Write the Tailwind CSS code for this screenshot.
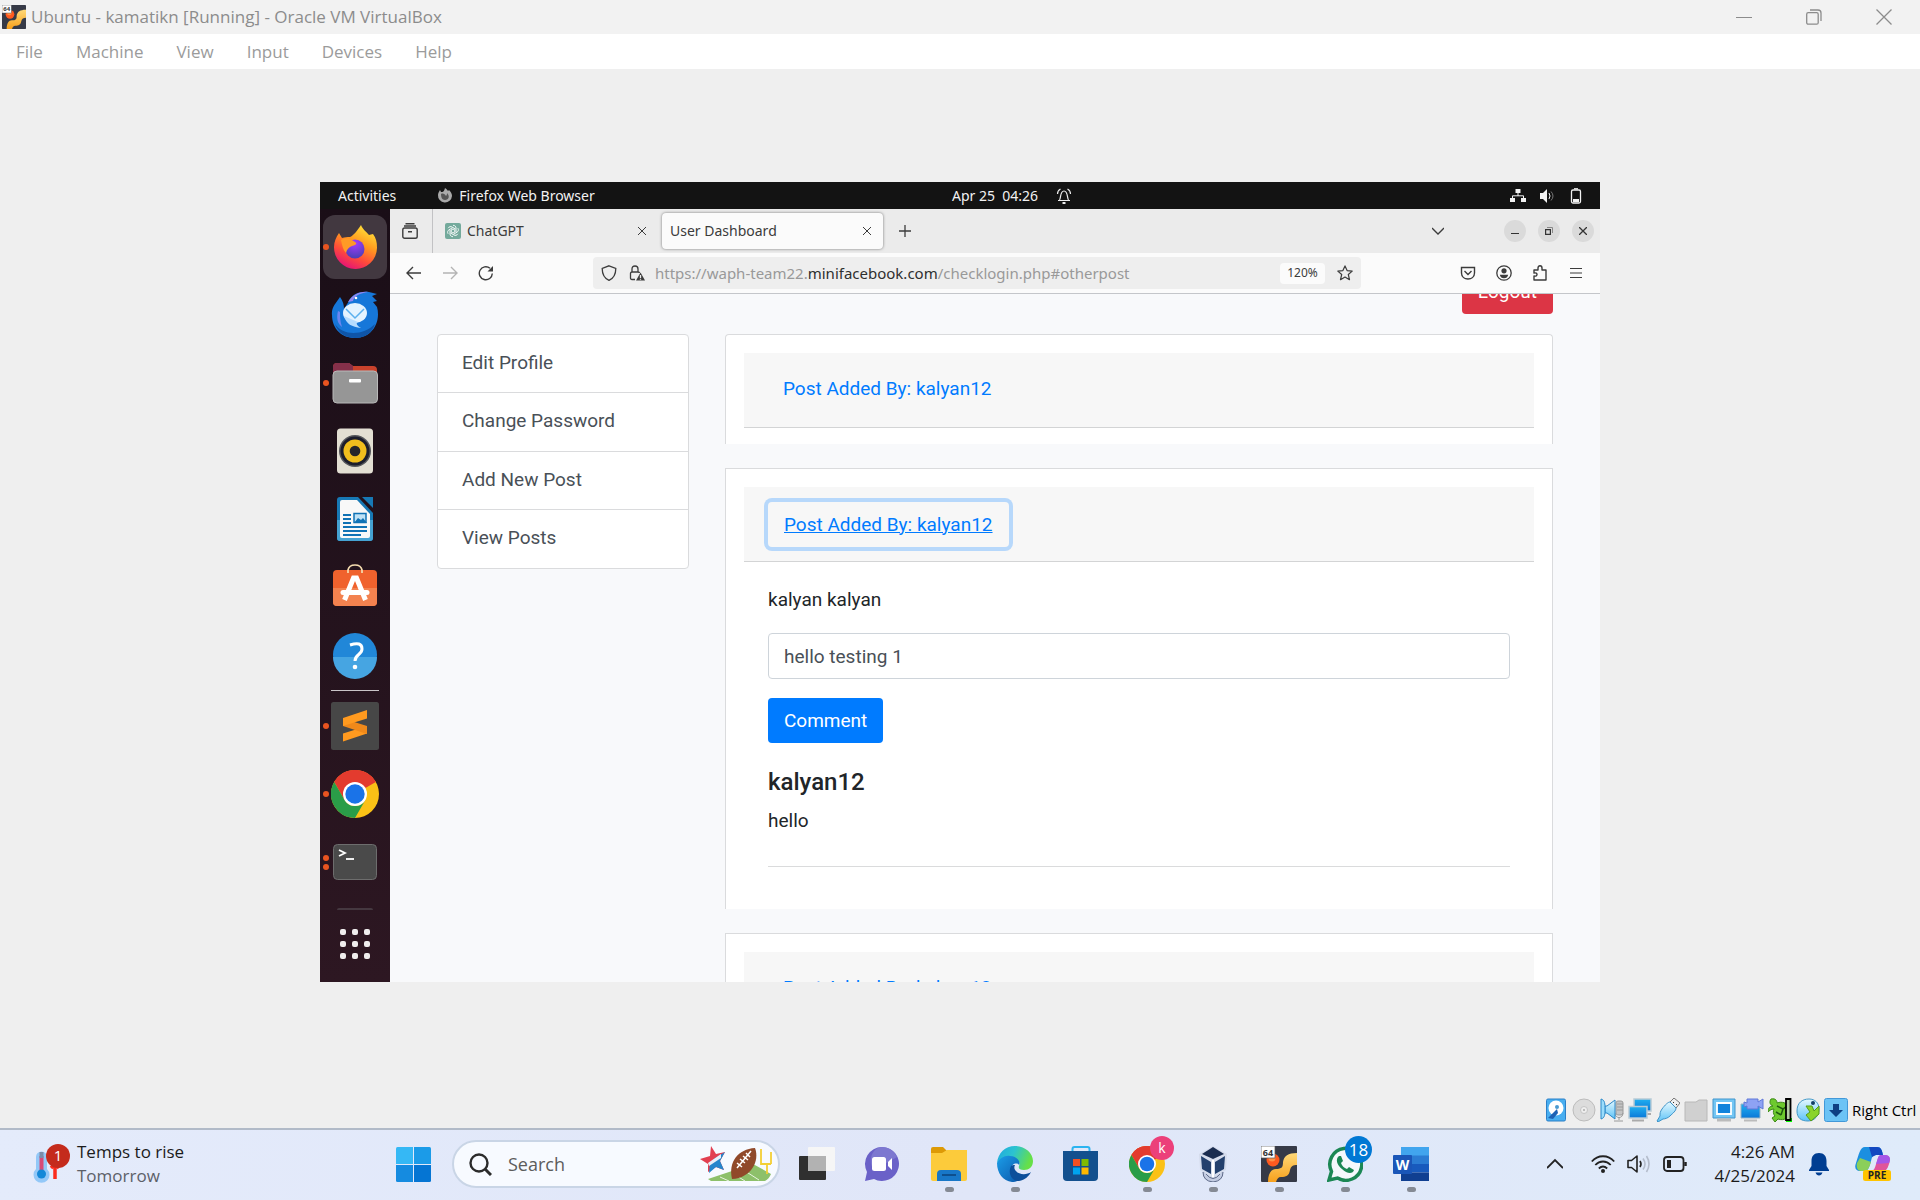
<!DOCTYPE html>
<html lang="en">
<head>
<meta charset="utf-8">
<title>Ubuntu - kamatikn [Running] - Oracle VM VirtualBox</title>
<script src="https://cdn.jsdelivr.net/npm/@tailwindcss/browser@4"></script>
</head>
<body class="flex h-screen flex-col overflow-hidden bg-[#efefef] font-['Open_Sans',sans-serif]">

<!-- Gradients and artwork shared by several icons -->
<svg class="absolute size-0" aria-hidden="true">
  <defs>
    <linearGradient id="gold" x1="0" y1="0" x2="0" y2="1"><stop offset="0" stop-color="#ffd978"/><stop offset="1" stop-color="#f7a01c"/></linearGradient>
    <linearGradient id="sky" x1="0" y1="0" x2="0" y2="1"><stop offset="0" stop-color="#e4f8ff"/><stop offset="1" stop-color="#5dc3f7"/></linearGradient>
    <linearGradient id="azure" x1="0" y1="0" x2="0" y2="1"><stop offset="0" stop-color="#22b0f0"/><stop offset="1" stop-color="#0a78d8"/></linearGradient>
    <linearGradient id="ffbody" x1=".8" y1="0" x2=".3" y2="1"><stop offset="0" stop-color="#ffe93c"/><stop offset=".4" stop-color="#ff9a1f"/><stop offset=".7" stop-color="#ff4b3a"/><stop offset="1" stop-color="#e3107a"/></linearGradient>
    <radialGradient id="ffglobe" cx=".5" cy=".2" r=".8"><stop offset="0" stop-color="#a53bff"/><stop offset="1" stop-color="#4a3fb5"/></radialGradient>
    <linearGradient id="edge1" x1="0" y1="0" x2="1" y2=".3"><stop offset="0" stop-color="#1fa8e0"/><stop offset=".5" stop-color="#2cc3d0"/><stop offset="1" stop-color="#66e048"/></linearGradient>
    <linearGradient id="edge2" x1="0" y1="0" x2="1" y2="1"><stop offset="0" stop-color="#1b9de8"/><stop offset="1" stop-color="#0b55a8"/></linearGradient>
    <symbol id="chrome" viewBox="0 0 48 48">
      <circle cx="24" cy="24" r="24" fill="#fbc116"/>
      <path d="M24 24 3.2 12A24 24 0 0 1 44.8 12Z" fill="#e33b2e"/>
      <path d="M24 12h20.8A24 24 0 0 0 3.2 12L13.6 30Z" fill="#e33b2e"/>
      <path d="M3.2 12A24 24 0 0 0 24 48L34.4 30A12 12 0 0 1 13.6 30Z" fill="#2a9d48"/>
      <circle cx="24" cy="24" r="12" fill="#fff"/><circle cx="24" cy="24" r="9.7" fill="#1a73e8"/>
    </symbol>
    <symbol id="vm64" viewBox="0 0 36 36">
      <rect width="36" height="36" rx="1" fill="#363a47"/>
      <circle cx="12" cy="14" r="6.5" fill="#ff5a1f"/><circle cx="11" cy="12" r="3.5" fill="#ff9248"/>
      <path d="M36 7v12c-4 0-6 1-7 5-1 6-4 7-9 7-3 0-4 2-5 5H7c0-8 3-13 8-13 6 0 7-2 7-7 1-6 5-9 14-9Z" fill="url(#gold)"/>
      <rect x="0" y="0" width="14" height="12" fill="#fff" stroke="#555" stroke-width=".7"/>
      <text x="7" y="9.5" text-anchor="middle" font-family="Open Sans" font-size="9" font-weight="700" fill="#333">64</text>
    </symbol>
  </defs>
</svg>

<!-- Host window title bar -->
<header class="flex h-[34px] shrink-0 items-center bg-[#f2f2f2] text-[#8c8c8c]">
  <svg class="ml-0.5 size-6" viewBox="0 0 36 36"><use href="#vm64"/></svg>
  <h1 class="ml-[5px] text-[17px]">Ubuntu - kamatikn [Running] - Oracle VM VirtualBox</h1>
  <div class="ml-auto flex items-center gap-[54px] pr-7">
    <button aria-label="Minimize"><svg class="size-4" viewBox="0 0 16 16" fill="none" stroke="currentColor"><path d="M0 8.500h16"/></svg></button>
    <button aria-label="Restore"><svg class="size-4" viewBox="0 0 16 16" fill="none" stroke="currentColor" stroke-width="1.300"><rect x=".7" y="3.700" width="11.500" height="11.500" rx="1.500"/><path d="M4 1h8q3 0 3 3v8"/></svg></button>
    <button aria-label="Close"><svg class="size-4" viewBox="0 0 16 16" fill="none" stroke="currentColor" stroke-width="1.300"><path d="m.5.5 15 15m0-15-15 15"/></svg></button>
  </div>
</header>

<nav class="flex h-[35px] shrink-0 items-center gap-[33px] bg-white px-4 text-[17px] text-[#9b9b9b]" aria-label="Machine menu">
  <button>File</button><button>Machine</button><button>View</button><button>Input</button><button>Devices</button><button>Help</button>
</nav>

<!-- Guest display -->
<main class="flex min-h-0 flex-1 items-center justify-center">
<section class="flex aspect-[8/5] w-2/3 flex-col overflow-hidden" aria-label="Guest screen">

  <div class="relative flex h-[27px] shrink-0 items-center bg-[#131313] font-['Noto_Sans',sans-serif] text-sm text-[#f2f2f2]">
    <button class="ml-[18px]">Activities</button>
    <button class="ml-[41px] flex items-center gap-1.5">
      <svg class="size-4" viewBox="0 0 16 16"><path d="M1 7C1 5 2 4 3 2l1 2c2 0 3 0 4-4 2 1 3 3 3 3l1-1c2 2 3 4 3 6a7 7 0 0 1-14-1Z" fill="#aaa"/><path d="M4 6c2-1 4 0 5 2 1-1 1-2 1-3 3 3 2 7-2 7-3 0-4-3-4-6Z" fill="#555"/></svg>
      Firefox Web Browser
    </button>
    <div class="absolute inset-x-0 flex items-center justify-center gap-[18px] pl-[104px]">
      <time class="whitespace-pre">Apr 25  04:26</time>
      <svg class="size-4" viewBox="0 0 16 16" fill="none" stroke="#eee" stroke-width="1.200"><path d="M2 12.500h12M3.500 12C5 10 4 3 8 3s3 7 4.500 9M1.500 6c0-3 1-4 3-5M14.500 6c0-3-1-4-3-5"/><path d="M6.500 15h3" stroke-width="2"/></svg>
    </div>
    <div class="ml-auto flex items-center gap-[13px] pr-4">
      <svg class="size-4" viewBox="0 0 16 16" fill="#f2f2f2"><path d="M5.500 1h5v4h-5zM0 10h5v4H0zM11 10h5v4h-5z"/><path d="M8 5v3M2.500 11V7.800h11V11" fill="none" stroke="#f2f2f2"/></svg>
      <svg class="size-4" viewBox="0 0 16 16" fill="#f2f2f2"><path d="M1 5h3l4-4v14l-4-4H1z"/><path d="M10 5q2 3 0 6" fill="none" stroke="#f2f2f2"/><path d="M12 3.500q4 4.500 0 9" fill="none" stroke="#777"/></svg>
      <svg class="size-4" viewBox="0 0 16 16" fill="none" stroke="#f2f2f2" stroke-width="1.300"><rect x="3.500" y="2" width="9" height="13" rx="1.500"/><path d="M6 .8h4"/><path d="M5 11h6v3H5z" fill="#f2f2f2" stroke="none"/></svg>
    </div>
  </div>

  <div class="flex min-h-0 flex-1">
    <!-- Dock -->
    <aside class="flex w-[70px] shrink-0 flex-col items-center bg-linear-to-b from-[#1a0e17] to-[#2d1722] pt-1" aria-label="Dock">
      <button class="relative flex h-[68px] w-full items-center justify-center" aria-label="Firefox">
        <span class="absolute left-[3px] flex size-16 rounded-xl bg-[#423840]"></span>
        <span class="absolute left-[3px] size-1.5 rounded-full bg-[#e95420]"></span>
        <svg class="relative size-11" viewBox="0 0 44 44"><path d="M1 22C1 17 3 12 6 8l3 5c3-1 5-1 8-1 3-1 7-6 11-12 2 5 5 6 8 10l4-1c3 4 4 8 4 14a21 21 0 0 1-43-1Z" fill="url(#ffbody)"/><circle cx="22" cy="24" r="9.500" fill="url(#ffglobe)"/><path d="M8 15c4-3 9-2 14 2 2 1 2 3-3 4-3 1-5 3-6 7-3-3-4-8-5-13Z" fill="#ff9a26"/></svg>
      </button>
      <button class="flex h-[68px] items-center" aria-label="Thunderbird">
        <svg class="size-12" viewBox="0 0 48 48"><path d="M1 24C0 17 5 12 9 6c3 4 4 8 4 12l5-8C21 3 29 0 38 1l8 2-5 2 5 5-4 1 4 5c4 14-4 31-22 31C11 47 1 38 1 24Z" fill="#1677d9"/><path d="M4 33c8 12 28 12 40 0-3 9-10 14-20 14C15 47 7 42 4 33Z" fill="#0f55a8"/><path d="M17 11C21 4 29 0 37 1c-8 1-14 4-15 9Z" fill="#9287f0"/><circle cx="25" cy="7" r="1.300" fill="#fff"/><ellipse cx="24" cy="22" rx="12" ry="10" fill="#e4f3ff"/><path d="M13 25c2 8 8 11 17 12-5-3-5-5-3-6Z" fill="#b5dcff"/><path d="m15 18 9 9 9-9" fill="none" stroke="#5bb0ee" stroke-width="1.500"/><path d="M7 20c-2 8 0 13 4 16-2-6-2-11-2-15Z" fill="#6a86f0"/></svg>
      </button>
      <button class="relative flex h-[68px] w-full items-center justify-center" aria-label="Files">
        <span class="absolute left-[3px] size-1.5 rounded-full bg-[#e95420]"></span>
        <svg class="size-12" viewBox="0 0 48 48"><path d="M2 8q0-4 4-4h12l4 3h20q4 0 4 4v12H2Z" fill="#c9422c"/><path d="M2 8q0-4 4-4h12l4 3v12H2Z" fill="#85304a"/><rect x="2" y="12" width="44.500" height="32" rx="4" fill="#969696" stroke="#b9b9b9"/><rect x="18" y="20" width="12" height="3.500" rx="1" fill="#fff"/></svg>
      </button>
      <button class="flex h-[68px] items-center" aria-label="Rhythmbox">
        <svg class="size-12" viewBox="0 0 48 48"><rect x="6" y="1.500" width="36" height="45" rx="3.500" fill="#e3dfd3"/><circle cx="24" cy="24" r="16" fill="#55565a"/><circle cx="24" cy="24" r="14.500" fill="#1c1d2c"/><circle cx="24" cy="24" r="11.500" fill="#f0bd1d"/><circle cx="24" cy="24" r="5.300" fill="#26252a"/></svg>
      </button>
      <button class="flex h-[68px] items-center" aria-label="LibreOffice Writer">
        <svg class="size-12" viewBox="0 0 48 48"><path d="M9 2h18l15 16v25q0 3-3 3H9q-3 0-3-3V5q0-3 3-3Z" fill="#1779b5"/><path d="M6 25h36v18q0 3-3 3H9q-3 0-3-3Z" fill="#45a2d2"/><path d="M11 5h15l13 14v22q0 2-2 2H11q-2 0-2-2V7q0-2 2-2Z" fill="#f8f8f8"/><path d="M31 2h11v11Z" fill="#1779b5"/><path d="M12 20h8M12 24h8M12 28h8M12 32h24M12 36h24M12 40h18" stroke="#0f72b5" stroke-width="2"/><path d="M23 18.500h12v9H23z" fill="#bfe2f6" stroke="#0f72b5" stroke-width="1.500"/><path d="m23 28 4-5 3 2 2-2 4 5Z" fill="#0f72b5"/></svg>
      </button>
      <button class="flex h-[68px] items-center" aria-label="Ubuntu Software">
        <svg class="size-12" viewBox="0 0 48 48"><rect x="2" y="7" width="44" height="36" rx="4" fill="#f0622d"/><path d="M2 25h44v14q0 4-4 4H6q-4 0-4-4Z" fill="#f3824f"/><path d="M17 10V7q1-5 7-5t7 5v3" fill="none" stroke="#f5ddb0" stroke-width="1.700"/><path d="m13.500 37 9-22h3l9 22" fill="none" stroke="#fff" stroke-width="5"/><path d="M12 29.500h24" stroke="#fff" stroke-width="5" stroke-linecap="round"/></svg>
      </button>
      <button class="flex h-[68px] items-center" aria-label="Help">
        <svg class="size-12" viewBox="0 0 48 48"><circle cx="24" cy="24" r="22" fill="#2187d8"/><path d="M2 26h44a22 22 0 0 1-44 0Z" fill="#46a5e2"/><path d="M19 14q12-4 12 4c0 6-7 5-7 12" fill="none" stroke="#fff" stroke-width="3"/><circle cx="24" cy="36" r="2.300" fill="#fff"/></svg>
      </button>
      <div class="my-px h-px w-12 bg-[#c9c4c7]"></div>
      <button class="relative flex h-[68px] w-full items-center justify-center" aria-label="Sublime Text">
        <span class="absolute left-[3px] size-1.5 rounded-full bg-[#e95420]"></span>
        <svg class="size-12" viewBox="0 0 48 48"><rect width="48" height="48" rx="2.500" fill="#474747"/><path d="M12 31.500 36 24v7.500L12 39.500Z" fill="#ff9a1f"/><path d="M12 16.500 36 24v8l-24-8Z" fill="#f0891a"/><path d="M12 16 36 8v8.500L12 24Z" fill="#ff9a1f"/></svg>
      </button>
      <button class="relative flex h-[68px] w-full items-center justify-center" aria-label="Google Chrome">
        <span class="absolute left-[3px] size-1.5 rounded-full bg-[#e95420]"></span>
        <svg class="size-12"><use href="#chrome"/></svg>
      </button>
      <button class="relative flex h-[68px] w-full items-center justify-center" aria-label="Terminal">
        <span class="absolute left-[3px] flex flex-col gap-[3px]"><i class="size-1.5 rounded-full bg-[#e95420]"></i><i class="size-1.5 rounded-full bg-[#e95420]"></i></span>
        <svg class="size-12" viewBox="0 0 48 48"><rect x="2.500" y="6.500" width="43" height="35" rx="4" fill="#4a4a4a" stroke="#6d6d6d"/><path d="m8 12 6 3-6 3" fill="none" stroke="#fff" stroke-width="1.800"/><path d="M15 21h8" stroke="#fff" stroke-width="1.800"/></svg>
      </button>
      <div class="mt-3 h-0.5 w-9 rounded-t-full bg-[#453840]"></div>
      <button class="mt-[19px] grid grid-cols-3 gap-1.5" aria-label="Show Applications">
        <i class="size-1.5 rounded-xs bg-[#f0eeee]"></i><i class="size-1.5 rounded-xs bg-[#f0eeee]"></i><i class="size-1.5 rounded-xs bg-[#f0eeee]"></i>
        <i class="size-1.5 rounded-xs bg-[#f0eeee]"></i><i class="size-1.5 rounded-xs bg-[#f0eeee]"></i><i class="size-1.5 rounded-xs bg-[#f0eeee]"></i>
        <i class="size-1.5 rounded-xs bg-[#f0eeee]"></i><i class="size-1.5 rounded-xs bg-[#f0eeee]"></i><i class="size-1.5 rounded-xs bg-[#f0eeee]"></i>
      </button>
    </aside>

    <!-- Firefox window -->
    <div class="flex min-w-0 flex-1 flex-col">
      <div class="flex h-11 shrink-0 items-center bg-[#ebebeb] font-['Noto_Sans',sans-serif] text-sm text-[#3c3c3c]">
        <button class="flex h-full w-[43px] items-center border-r border-[#c2c2c4] pl-3" aria-label="Recent browsing">
          <svg class="size-4" viewBox="0 0 16 16" fill="none" stroke="currentColor" stroke-width="1.400"><rect x=".8" y="5" width="14.400" height="10.200" rx="1.800"/><path d="M2 3h12M3.500.7h9M6 8.700h4"/></svg>
        </button>
        <div class="flex w-[229px] items-center pr-4 pl-3">
          <svg class="size-4" viewBox="0 0 16 16"><rect width="16" height="16" rx="2" fill="#74aa9c"/><g fill="none" stroke="#fff" stroke-width=".9"><circle cx="8" cy="8" r="1.900"/><path d="M8 2.300c2 0 3 1.400 3 2.700v4M12.900 5.200c1 1.700.3 3.300-.9 4l-3.400 2M12.900 10.800c-1 1.700-2.700 1.900-3.900 1.200L5.500 10M8 13.700c-2 0-3-1.400-3-2.700V7M3.100 10.800c-1-1.700-.3-3.300.9-4l3.400-2M3.100 5.200c1-1.700 2.700-1.900 3.900-1.200l3.500 2"/></g></svg>
          <span class="ml-1.5">ChatGPT</span>
          <button class="ml-auto" aria-label="Close tab"><svg class="size-2" viewBox="0 0 8 8" fill="none" stroke="currentColor"><path d="m0 0 8 8m0-8-8 8"/></svg></button>
        </div>
        <div class="flex h-9 w-[221px] items-center rounded bg-[#fbfbfb] pr-3 pl-2 shadow-[0_0_3px_rgba(0,0,0,0.5)]">
          <span>User Dashboard</span>
          <button class="ml-auto" aria-label="Close tab"><svg class="size-2" viewBox="0 0 8 8" fill="none" stroke="currentColor"><path d="m0 0 8 8m0-8-8 8"/></svg></button>
        </div>
        <button class="ml-4" aria-label="New tab"><svg class="size-3" viewBox="0 0 12 12" fill="none" stroke="currentColor" stroke-width="1.300"><path d="M6 0v12M0 6h12"/></svg></button>
        <button class="ml-auto" aria-label="List all tabs"><svg class="size-3" viewBox="0 0 12 12" fill="none" stroke="currentColor" stroke-width="1.300"><path d="m0 3 6 6 6-6"/></svg></button>
        <div class="ml-[60px] flex gap-3 pr-1.5">
          <button class="flex size-[22px] items-center justify-center rounded-full bg-[#dadada]" aria-label="Minimize"><svg class="size-2" viewBox="0 0 8 8"><path d="M0 6h8v1H0z" fill="#333"/></svg></button>
          <button class="flex size-[22px] items-center justify-center rounded-full bg-[#dadada]" aria-label="Restore"><svg class="size-2" viewBox="0 0 8 8" fill="none"><path d="M2 .5h5.500V6" stroke="#888"/><path d="M.6 2.600h4.800v4.800H.6z" stroke="#333" stroke-width="1.200"/></svg></button>
          <button class="flex size-[22px] items-center justify-center rounded-full bg-[#dadada]" aria-label="Close"><svg class="size-2" viewBox="0 0 8 8" fill="none" stroke="#333" stroke-width="1.300"><path d="m0 0 8 8m0-8-8 8"/></svg></button>
        </div>
      </div>

      <div class="flex h-[41px] shrink-0 items-center border-b border-[#c4c6ca] bg-[#fbfbfb] font-['Noto_Sans',sans-serif] text-[#3c3c3c]">
        <div class="flex items-center gap-5 pl-4">
          <button aria-label="Back"><svg class="size-4" viewBox="0 0 16 16" fill="none" stroke="currentColor" stroke-width="1.400"><path d="M15 8H1m6-6L1 8l6 6"/></svg></button>
          <button aria-label="Forward"><svg class="size-4" viewBox="0 0 16 16" fill="none" stroke="#b4b4b4" stroke-width="1.400"><path d="M1 8h14M9 2l6 6-6 6"/></svg></button>
          <button aria-label="Reload"><svg class="size-4" viewBox="0 0 16 16" fill="none" stroke="currentColor" stroke-width="1.400"><path d="M14.300 8.500A6.500 6.500 0 1 1 12 3.300"/><path d="M15 1v5.500H9.500Z" fill="currentColor" stroke="none"/></svg></button>
        </div>
        <div class="ml-[99px] flex h-8 w-[768px] items-center rounded bg-[#eeeeee] pl-2">
          <svg class="size-4" viewBox="0 0 16 16" fill="none" stroke="currentColor" stroke-width="1.300"><path d="m8 .8 6.800 2.600C14.800 9 13 13 8 15.300 3 13 1.200 9 1.200 3.400Z"/></svg>
          <svg class="ml-3 size-4" viewBox="0 0 16 16" fill="none" stroke="currentColor" stroke-width="1.300"><path d="M6 14.500H3q-1.500 0-1.500-1.500V8.500Q1.500 7 3 7h6q1.500 0 1.500 1M3 7V4q0-3 3-3t3 3v3"/><path d="m11.500 7.500 4.500 8H7Z" fill="currentColor" stroke="none"/><path d="M11.500 10v3m0 .8v1" stroke="#eee"/></svg>
          <div role="textbox" aria-label="Address" class="ml-2.5 text-[15px] whitespace-nowrap text-[#999999]">https://waph-team22.<span class="text-[#2f2f2f]">minifacebook.com</span>/checklogin.php#otherpost</div>
          <button class="ml-auto flex h-[21px] w-[45px] items-center justify-center rounded bg-[#fbfbfb] text-xs">120%</button>
          <button class="mr-2 ml-3" aria-label="Bookmark this page"><svg class="size-4" viewBox="0 0 16 16" fill="none" stroke="currentColor" stroke-width="1.200" stroke-linejoin="round"><path d="m8 .9 2.100 4.700 5.100.5-3.900 3.400 1.200 5.200L8 12l-4.500 2.700 1.200-5.200L.8 6.100l5.100-.5Z"/></svg></button>
        </div>
        <div class="ml-auto flex items-center gap-5 pr-4">
          <button aria-label="Save to Pocket"><svg class="size-4" viewBox="0 0 16 16" fill="none" stroke="currentColor" stroke-width="1.400"><path d="M1.500 2.500h13V8c0 8-13 8-13 0Z"/><path d="m4.500 6 3.500 3.500L11.500 6"/></svg></button>
          <button aria-label="Account"><svg class="size-4" viewBox="0 0 16 16" fill="none" stroke="currentColor" stroke-width="1.300"><circle cx="8" cy="8" r="7.200"/><circle cx="8" cy="5.800" r="2.600" fill="currentColor" stroke="none"/><path d="M3.800 9.800h8.400c-.5 2.500-2 3.500-4.200 3.500s-3.700-1-4.200-3.500Z" fill="currentColor" stroke="none"/></svg></button>
          <button aria-label="Extensions"><svg class="size-4" viewBox="0 0 16 16" fill="none" stroke="currentColor" stroke-width="1.400"><path d="M2 15V11c4 1 4-4 0-3V5h4V3c0-3 4-3 4 0v2h4v10Z" stroke-linejoin="round"/></svg></button>
          <button aria-label="Menu"><svg class="size-4" viewBox="0 0 16 16" fill="none" stroke="currentColor" stroke-width="1.200"><path d="M2 3.500h12M2 8h12M2 12.500h12"/></svg></button>
        </div>
      </div>

      <!-- User dashboard page, scrolled so the logout button is cut by the toolbar -->
      <div class="min-h-0 flex-1 overflow-hidden bg-[#f8f9fb] px-[47px] font-[Roboto,sans-serif] text-[19px] leading-[29px] text-[#212529]">
        <div class="-mt-[25px] flex justify-end">
          <button class="h-[45px] rounded bg-[#dc3545] px-4 text-white">Logout</button>
        </div>
        <div class="mt-5 flex items-start gap-9">
          <ul class="grid h-[235px] w-[252px] shrink-0 grid-rows-4 divide-y divide-[#dadbdd] rounded border border-[#dadbdd] bg-white text-[#495057]">
            <li><a href="#profile" class="flex h-full items-center px-6 pb-0.5">Edit Profile</a></li>
            <li><a href="#password" class="flex h-full items-center px-6 pb-0.5">Change Password</a></li>
            <li><a href="#newpost" class="flex h-full items-center px-6 pb-0.5">Add New Post</a></li>
            <li><a href="#posts" class="flex h-full items-center px-6 pb-0.5">View Posts</a></li>
          </ul>
          <div class="flex min-w-0 flex-1 flex-col gap-6">
            <article class="rounded-t border border-b-0 border-[#dadbdd] bg-white p-[18px] pb-4">
              <div class="flex h-[75px] items-center border-b border-[#d3d4d5] bg-[#f7f7f7] px-6 pb-1">
                <button class="h-[45px] px-[15px] text-[#007bff]">Post Added By: kalyan12</button>
              </div>
            </article>
            <article class="border border-b-0 border-[#dadbdd] bg-white p-[18px]">
              <div class="flex h-[75px] items-center border-b border-[#d3d4d5] bg-[#f7f7f7] px-6">
                <button class="h-[45px] rounded px-4 text-[#007bff] underline ring-4 ring-[#b7d8fb]">Post Added By: kalyan12</button>
              </div>
              <div class="px-6 pt-[23px] pb-6">
                <p>kalyan kalyan</p>
                <form class="mt-[19px]">
                  <input type="text" aria-label="Comment text" value="hello testing 1" class="block h-[46px] w-full rounded border border-[#ced4da] px-[15px] text-[#495057]">
                  <button type="button" class="mt-[19px] block h-[45px] rounded bg-[#007bff] px-4 text-white">Comment</button>
                </form>
                <h5 class="mt-[25px] text-2xl leading-[29px] font-medium">kalyan12</h5>
                <p class="mt-[9px]">hello</p>
                <hr class="mt-[31px] border-[#dadbdc]">
              </div>
            </article>
            <article class="border border-b-0 border-[#dadbdd] bg-white p-[18px]">
              <div class="flex h-[75px] items-center border-b border-[#d3d4d5] bg-[#f7f7f7] px-6 pb-1">
                <button class="h-[45px] px-[15px] text-[#007bff]">Post Added By: kalyan12</button>
              </div>
            </article>
          </div>
        </div>
      </div>
    </div>
  </div>
</section>
</main>

<!-- VirtualBox status bar -->
<div class="flex h-[33px] shrink-0 items-start justify-end gap-1 pt-[3px] pr-0.5 text-black">
  <svg class="size-6" viewBox="0 0 24 24"><rect x="2.500" y="1" width="19" height="22" rx="1.500" fill="#48aef0" stroke="#2b80c8"/><circle cx="12" cy="10" r="7.500" fill="#fff"/><circle cx="13" cy="9" r="2" fill="#4a9ad0"/><path d="m4 20 9-9 1 4-5 6Z" fill="#1d62b5"/></svg>
  <svg class="size-6" viewBox="0 0 24 24"><circle cx="12" cy="12" r="11" fill="#dcdcdc" stroke="#bcbcbc"/><circle cx="12" cy="12" r="3.500" fill="#eee" stroke="#c4c4c4"/><circle cx="12" cy="12" r="1" fill="#aaa"/></svg>
  <svg class="size-6" viewBox="0 0 24 24"><rect x="16" y="3" width="7" height="14" rx="2" fill="#c4c4c4" stroke="#9a9a9a"/><path d="M15 15c0 6 8 6 8 0M19 19v3m-5 1h9M17 6h6m-6 3h6m-6 3h6" fill="none" stroke="#9a9a9a"/><path d="M5 8h2l8-6v19l-8-6H5Z" fill="url(#sky)" stroke="#2b88c8"/><path d="M1 1c4 1 4 5 4 10s0 9-4 10Z" fill="#9bdcfb" stroke="#2b88c8"/></svg>
  <svg class="size-6" viewBox="0 0 24 24"><path d="M6 1h17v12H6z" fill="url(#azure)" stroke="#b9ccd6" stroke-width="1.500"/><path d="M18 16h5" stroke="#aaa" stroke-width="2"/><path d="M1 8.500h18V20H1z" fill="url(#azure)" stroke="#b9ccd6" stroke-width="1.500"/><path d="M4 22.500h12" stroke="#aaa" stroke-width="2"/></svg>
  <svg class="size-6" viewBox="0 0 24 24"><path d="m14 4 4-4 6 5-4 5Z" fill="#eee" stroke="#777"/><path d="m17 4 1 1m2 1 1 1" stroke="#333"/><path d="M6 11c3-4 6-7 8-7l6 6c0 3-3 5-6 8-2 2-5 3-7 3l-5 3-1-1 3-5c0-3 0-4 2-7Z" fill="url(#sky)" stroke="#3f93c8"/></svg>
  <svg class="size-6" viewBox="0 0 24 24"><path d="M1 4h11l3-2h8v21H1Z" fill="#d0d0d0" stroke="#b8b8b8"/></svg>
  <svg class="size-6" viewBox="0 0 24 24"><path d="M1 1h22v19H1z" fill="#73c6f4" stroke="#4195cc"/><path d="M5 5h14v11H5z" fill="#1183dc" stroke="#fff" stroke-width="1.800"/><path d="M5 22h14" stroke="#bbb" stroke-width="3"/></svg>
  <svg class="size-6" viewBox="0 0 24 24"><path d="M1 6h19v14H1z" fill="url(#azure)" stroke="#9ab4c4"/><path d="M4 22.500h13" stroke="#bbb" stroke-width="2"/><path d="M7 1h11v3l5-3v10l-5-3v3H7V8L4 9V4l3 1Z" fill="#8ea2f4" stroke="#6078d8"/></svg>
  <svg class="size-6" viewBox="0 0 24 24"><path d="M3 1c5-1 6 2 6 4 5-2 10 0 12 4l-2 11c-3 2-6 2-9 1l-3 3-3-4 3-2c-2-2-2-5-1-7-3 0-5 2-6 3 0-4 2-6 5-6C2 7 1 4 3 1Z" fill="#6dc92e" stroke="#3b8a15"/><path d="m9 8 6 3 4-3m-4 3-2 6m-5-3 5 3" fill="none" stroke="#1f5a10" stroke-width="1.500"/><path d="M18 20h6v4h-6z" fill="#0f0"/><path d="M18 1h4.500v21H18z" fill="#b5cda7" stroke="#000" stroke-width="1.800"/></svg>
  <svg class="size-6" viewBox="0 0 24 24"><path d="M1 13C1 5 6 1 13 1c6 0 10 4 10 10s-4 12-11 12S1 20 1 13Z" fill="url(#sky)" stroke="#4298c8"/><circle cx="17" cy="5" r="2" fill="#113f66"/><path d="M10 8h6l2 5 5-5v8l-8 7-5-6 4-3Z" fill="#8ad42c" stroke="#559b18"/></svg>
  <svg class="size-6" viewBox="0 0 24 24"><rect x=".5" y=".5" width="23" height="23" rx="2" fill="#6cc3f5" stroke="#4298d8"/><path d="M9 6h6v6h4l-7 7-7-7h4Z" fill="#0e3f83"/></svg>
  <span class="w-[66px] text-[15px] leading-6 whitespace-nowrap">Right Ctrl</span>
</div>

<!-- Windows taskbar -->
<footer class="relative flex h-[72px] shrink-0 items-center border-t-2 border-[#b1bac8] bg-linear-to-r from-[#e4ebfb] via-[#e0e6f8] to-[#dfebfa] pb-0.5 text-[17px] leading-6 text-[#1b1b1b]">
  <button class="flex items-center gap-1.5 pl-[31px] text-left">
    <svg class="size-10 shrink-0" viewBox="0 0 40 40"><path d="M5 13a5.500 5.500 0 0 1 11 0v12a8 8 0 1 1-11 0Z" fill="#93c8f8"/><path d="M10.500 12v16" stroke="#d84a78" stroke-width="4"/><path d="M8.500 8h4v6h-4z" fill="#7b8ca8"/><circle cx="10.500" cy="30" r="4.500" fill="#1488d8"/><path d="M24 35V21m-4 3 4-4 4 4" fill="none" stroke="#fb2b1c" stroke-width="3.500"/><circle cx="27" cy="12" r="12" fill="#c42b1c"/><text x="27" y="17" text-anchor="middle" font-family="Open Sans" font-size="15" fill="#fff">1</text></svg>
    <span>Temps to rise<br><span class="text-[#5c6068]">Tomorrow</span></span>
  </button>

  <div class="absolute left-[396px] flex items-center">
    <button aria-label="Start"><svg class="size-[35px]" viewBox="0 0 35 35"><path d="M0 1.500Q0 0 1.500 0H17v17H0Z" fill="#35b8f5"/><path d="M18 0h15.500Q35 0 35 1.500V17H18Z" fill="#1b9be8"/><path d="M0 18h17v17H1.500Q0 35 0 33.500Z" fill="#158be0"/><path d="M18 18h17v15.500q0 1.500-1.500 1.500H18Z" fill="#0575d3"/></svg></button>
    <label class="ml-[21px] flex h-12 w-[328px] items-center rounded-full border-2 border-[#c9d5e6] bg-[#f7faff] pr-1 pl-[15px]">
      <svg class="size-[23px] shrink-0" viewBox="0 0 23 23" fill="none" stroke="#2b2b2b" stroke-width="2.400"><circle cx="10" cy="10" r="8.500"/><path d="m16 16 6 6" stroke-width="3"/></svg>
      <input type="search" placeholder="Search" aria-label="Search" class="ml-4 w-0 flex-1 bg-transparent text-lg placeholder:text-[#5c5c5c]">
      <svg class="h-9 w-[74px] shrink-0" viewBox="0 0 74 36"><path d="m8 33 45-15 18 10q-2 5-6 7H11Z" fill="#8dc06a"/><path d="m20 31 9 4m3-8 13 8M45 25l14 9" stroke="#e8f4e0" fill="none"/><path d="m11 0 5 8 9-2-5 9 4 9-8-3-8 5v-8l-8-5 10-3Z" fill="#e23f50"/><path d="m15 12 10-6-5 9 4 9-8-3-7 6 1-10Z" fill="#2586cc"/><path d="m8 17 13-9v4l-12 8Z" fill="#eaf0f8"/><path d="M32 33C28 16 38 3 55 2c5 13-4 30-23 31Z" fill="#90492a"/><path d="m37 22 14-17M37 17l5 4m-2-8 5 4m-2-7 5 4m-2-7 4 4" stroke="#fff" stroke-width="1.500"/><path d="M61 3v15h10M71 6v12m-4 0v10" fill="none" stroke="#f3cf35" stroke-width="1.800"/></svg>
    </label>
    <div class="ml-4 flex">
      <button class="flex h-12 w-[66px] items-center justify-start pl-[3px]" aria-label="Task view"><svg class="size-9" viewBox="0 0 36 36"><rect x="0" y="10" width="27" height="24" rx="1" fill="#2f2f2f"/><rect x="9" y="1" width="27" height="24" rx="1" fill="#f6f6f6"/><path d="M9 10h18v15H9z" fill="#b2b2b2"/></svg></button>
      <button class="flex h-12 w-[66px] items-center justify-start pl-0.5" aria-label="Chat"><svg class="size-9" viewBox="0 0 36 36"><path d="M18 1a17 17 0 1 1-8 32l-9 2 2-9A17 17 0 0 1 18 1Z" fill="#6a61c8"/><path d="M18 1a17 17 0 0 1 15 10L10 24C3 16 8 1 18 1Z" fill="#7d78d0"/><rect x="8" y="11" width="14" height="14" rx="2.500" fill="#fff"/><path d="m24 16 4-4v12l-4-4Z" fill="#fff"/></svg></button>
      <button class="relative flex h-12 w-[66px] items-center pl-[3px]" aria-label="File Explorer"><svg class="size-9" viewBox="0 0 36 36"><path d="M0 3q0-2 2-2h10l4 4-4 3H0Z" fill="#dd9a06"/><path d="M0 7h11l5-3h20v29q0 2-2 2H2q-2 0-2-2Z" fill="#fccb3b"/><path d="M6 35v-7q0-4 4-4h16q4 0 4 4v7Z" fill="#1877c8"/><path d="M11 29h14" stroke="#0e4f8e" stroke-width="2"/></svg><i class="absolute -bottom-1 left-[17px] h-[5px] w-[9px] rounded-full bg-[#858a94]"></i></button>
      <button class="relative flex h-12 w-[66px] items-center pl-[3px]" aria-label="Microsoft Edge"><svg class="size-9" viewBox="0 0 36 36"><path d="M0 17C1 7 8 0 18 0s18 7 18 15c0 6-4 9-9 9-4 0-6-1-5-4 2-4-2-8-7-8C7 12 2 15 0 17Z" fill="url(#edge1)"/><path d="M0 17c3-5 8-8 13-7 7 0 11 6 9 9-2-3-8-1-8 4 0 6 6 9 12 7-3 5-7 6-11 6C6 35 0 27 0 17Z" fill="url(#edge2)"/><path d="M14 20c-4 8 2 16 8 15 6-1 10-5 12-9-4 3-12 3-15-1-2-2-2-4-1-6-2 0-3 0-4 1Z" fill="#0d4f9a"/></svg><i class="absolute -bottom-1 left-[17px] h-[5px] w-[9px] rounded-full bg-[#858a94]"></i></button>
      <button class="flex h-12 w-[66px] items-center pl-[3px]" aria-label="Microsoft Store"><svg class="size-9" viewBox="0 0 36 36"><path d="M9.500 7V3q0-2 2-2h13q2 0 2 2v4" fill="none" stroke="#2bb4f0" stroke-width="2"/><path d="M0 5h35v26q0 4-4 4H4q-4 0-4-4Z" fill="#13508e"/><path d="M10 13h7v7h-7z" fill="#f25022"/><path d="M18.500 13h7v7h-7z" fill="#7fba00"/><path d="M10 21.500h7v7h-7z" fill="#00a4ef"/><path d="M18.500 21.500h7v7h-7z" fill="#ffb900"/></svg></button>
      <button class="relative flex h-12 w-[66px] items-center pl-[3px]" aria-label="Google Chrome"><svg class="size-9"><use href="#chrome"/></svg><span class="absolute -top-1 left-6 flex size-6 items-center justify-center rounded-full bg-[#ec407a] text-sm text-white">k</span><i class="absolute -bottom-1 left-[17px] h-[5px] w-[9px] rounded-full bg-[#858a94]"></i></button>
      <button class="relative flex h-12 w-[66px] items-center pl-[3px]" aria-label="VirtualBox"><svg class="size-9" viewBox="0 0 36 36"><path d="M8 26q0 9 10 10 10-1 10-10Z" fill="#c3cce2" stroke="#5d6987"/><path d="M11 28q7 9 14 0" fill="none" stroke="#5d6987"/><path d="m18 0 14 8-1 16-13 8L5 24 4 8Z" fill="#d5dcec"/><path d="m18 1 11 7-11 5L7 8Z" fill="#1a2c4f"/><path d="m6 10 10 6v12l-9-5ZM30 10l-10 6v12l9-5Z" fill="#23406d"/><path d="M18 14v17" stroke="#fff" stroke-width="2"/></svg><i class="absolute -bottom-1 left-[17px] h-[5px] w-[9px] rounded-full bg-[#858a94]"></i></button>
      <button class="relative flex h-12 w-[66px] items-center pl-[3px]" aria-label="Ubuntu virtual machine"><svg class="size-9"><use href="#vm64"/></svg><i class="absolute -bottom-1 left-[17px] h-[5px] w-[9px] rounded-full bg-[#858a94]"></i></button>
      <button class="relative flex h-12 w-[66px] items-center pl-[3px]" aria-label="WhatsApp"><svg class="size-9" viewBox="0 0 36 36"><path d="M2 34 4.500 25.500A16 16 0 1 1 10.500 32Z" fill="#f4f8fc" stroke="#1b8754" stroke-width="3.500"/><path d="M12 10c-4 3-2 9 3 13 5 5 11 5 12 1l-5-3-2 2c-3-1-5-3-6-6l2-2-2-5Z" fill="#1b8754"/></svg><span class="absolute -top-1 left-[21px] flex size-[27px] items-center justify-center rounded-full bg-[#0078d4] text-[17px] text-white">18</span><i class="absolute -bottom-1 left-[17px] h-[5px] w-[9px] rounded-full bg-[#858a94]"></i></button>
      <button class="relative flex h-12 w-[66px] items-center pl-[3px]" aria-label="Word"><svg class="size-9" viewBox="0 0 36 36"><path d="M8 1h28v9H8z" fill="#41a5ee"/><path d="M8 9.500h28V18H8z" fill="#2b7cd3"/><path d="M8 18h28v8.500H8z" fill="#185abd"/><path d="M8 26.500h28V35H8z" fill="#103f91"/><rect y="9" width="19" height="19" rx="1" fill="#1a56b8"/><text x="9.500" y="23.500" text-anchor="middle" font-family="Open Sans" font-size="14" font-weight="700" fill="#fff">W</text></svg><i class="absolute -bottom-1 left-[17px] h-[5px] w-[9px] rounded-full bg-[#858a94]"></i></button>
    </div>
  </div>

  <div class="ml-auto flex items-center pr-7">
    <button aria-label="Show hidden icons"><svg class="size-4" viewBox="0 0 16 16" fill="none" stroke="#222" stroke-width="1.800"><path d="m0 12 8-8 8 8"/></svg></button>
    <button class="ml-7 flex items-center gap-3" aria-label="Network, volume and battery">
      <svg class="size-6" viewBox="0 0 24 24" fill="none" stroke="#222" stroke-width="1.800"><path d="M.8 9.500c6-7 16.400-7 22.400 0M4.300 13c4.400-4.700 11-4.700 15.400 0M7.800 16.500c2.600-2.500 5.800-2.500 8.400 0"/><circle cx="12" cy="19" r="2" fill="#222" stroke="none"/></svg>
      <svg class="size-6" viewBox="0 0 24 24" fill="none" stroke="#222" stroke-width="1.600"><path d="M1 8.500h3.500L10 4v16l-5.500-4.500H1Z" stroke-linejoin="round"/><path d="M13 9q2 3 0 6"/><path d="M16 6.500q4 5.500 0 11M19.500 4q5 8 0 16" stroke="#b4bccb"/></svg>
      <svg class="size-6" viewBox="0 0 24 24" fill="none" stroke="#222" stroke-width="1.800"><rect x="1" y="5" width="19.500" height="14" rx="3"/><path d="M4 8h4v8H4z" fill="#222" stroke="none"/><path d="M22.500 10v4" stroke-width="2.500"/></svg>
    </button>
    <time class="ml-6 block w-[84px] text-right whitespace-nowrap">4:26 AM<br>4/25/2024</time>
    <button class="ml-3.5" aria-label="Notifications"><svg class="h-6 w-5" viewBox="0 0 20 24" fill="#003e92"><path d="M10 1c-5 0-7.500 3-7.500 8v5L0 18v1h20v-1l-2.500-4V9c0-5-2.500-8-7.500-8ZM6.500 20.500h7q-1 3-3.500 3t-3.500-3Z"/></svg></button>
    <button class="ml-[26px]" aria-label="Copilot"><svg class="h-9 w-[37px]" viewBox="0 0 37 36"><path d="M10 1h12c4 0 5 3 6 8h-7c-4 0-4 3-5 6-2 7-3 10-7 10H5c-4 0-6-3-4-8C4 8 5 1 10 1Z" fill="#1b8fe0"/><path d="M5 12 2 17c-1 5 1 8 4 8h3c4 0 5-3 7-9Z" fill="#8bcf5a"/><path d="M14 1h8c4 0 5 3 6 8h-7l-4 2Z" fill="#1348c0"/><path d="M26 9h4c5 0 6 4 4 9-2 6-3 7-7 7H15c5 0 5-4 7-10 1-4 2-6 4-6Z" fill="#e0559a"/><path d="M26 9h4c5 0 6 4 4 8l-13 1c2-5 2-9 5-9Z" fill="#a556e8"/><rect x="8" y="24" width="28" height="11" rx="2.500" fill="#ffc400"/><text x="22" y="33" text-anchor="middle" font-family="Open Sans" font-size="10" font-weight="700" fill="#222">PRE</text></svg></button>
  </div>
</footer>
</body>
</html>
